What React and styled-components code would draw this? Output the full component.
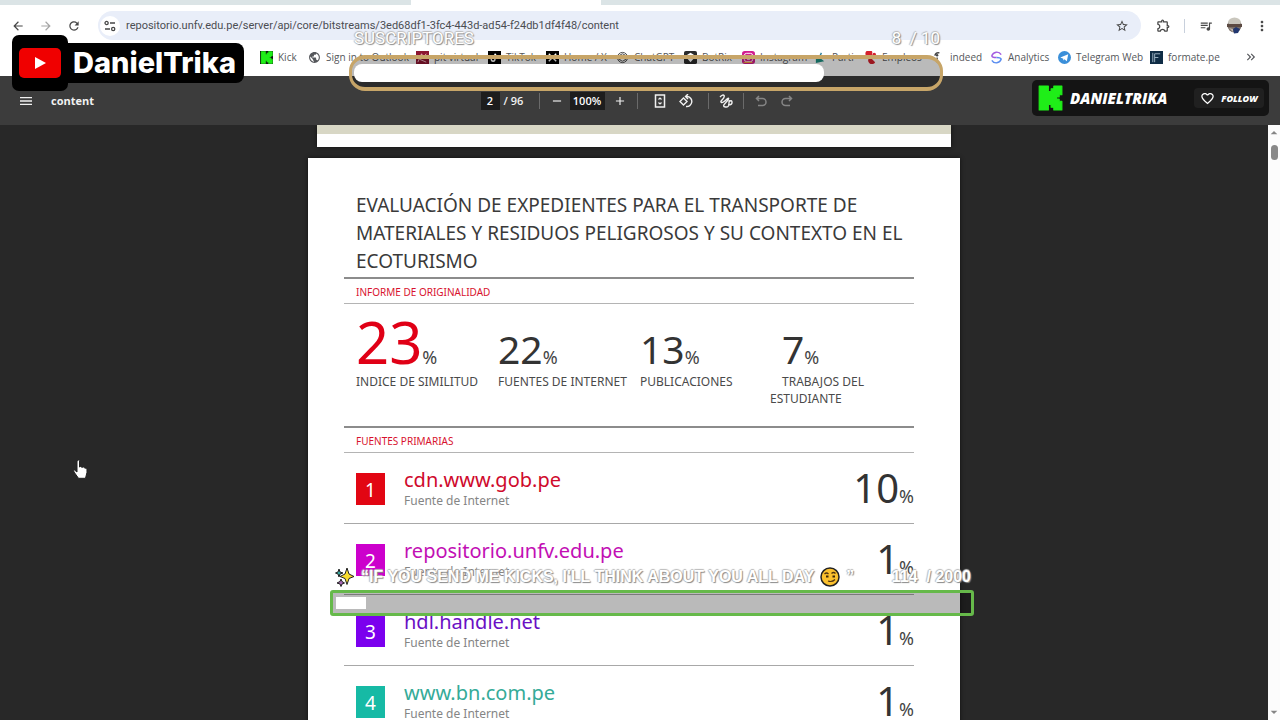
import React from 'react'
import styled, { createGlobalStyle, css } from 'styled-components'
import {
    MdArrowBack, MdArrowForward, MdRefresh, MdStarBorder, MdOutlineExtension, MdQueueMusic,
    MdMoreVert, MdMenu, MdAdd, MdRemove, MdFavoriteBorder,
    MdKeyboardDoubleArrowRight, MdPublic, MdArrowDropUp, MdArrowDropDown
} from 'react-icons/md'

const GlobalStyle = createGlobalStyle`
    * {
        box-sizing: border-box;
    }
    body {
        margin: 0;
        background-color: #282828;
        font-family: "Noto Sans", sans-serif;
        overflow: hidden;
    }
    button, input {
        font-family: inherit;
        border: none;
        padding: 0;
    }
    h1, h2, p, ol, dl, dd, dt {
        margin: 0;
        padding: 0;
        font-weight: 400;
    }
`

const Browser = styled.div`
    position: relative;
    display: flex;
    flex-direction: column;
    height: 100vh;
    width: 100%;
    overflow: hidden;
`

const TabStrip = styled.div`
    display: flex;
    justify-content: center;
    flex-shrink: 0;
    height: 5px;
    padding-right: 268px;
    background-color: #dbe4e6;
`

const ActiveTab = styled.div`
    width: 190px;
    background-color: #fff;
`

const NavBar = styled.nav`
    display: flex;
    align-items: center;
    flex-shrink: 0;
    height: 41px;
    padding: 0 4px;
    background-color: #fff;
    color: #474747;
    font-family: Roboto, sans-serif;
`

const IconButton = styled.button`
    display: flex;
    align-items: center;
    justify-content: center;
    width: ${props => props.$width || 28}px;
    height: 28px;
    background: none;
    color: ${props => props.$muted ? '#a5a5a5' : 'inherit'};
    font-size: ${props => props.$size || 14}px;
`

const AddressBar = styled.div`
    display: flex;
    align-items: center;
    flex: 1;
    height: 29px;
    margin: 0 8px 0 10px;
    padding: 0 5px;
    gap: 6px;
    border-radius: 15px;
    background-color: #e9eef9;
`

const SiteInfo = styled.button`
    display: flex;
    align-items: center;
    justify-content: center;
    width: 20px;
    height: 20px;
    margin-left: -3px;
    border-radius: 50%;
    background-color: #fff;
`

const Address = styled.input`
    flex: 1;
    background: none;
    color: #4b4d52;
    font-size: 11px;
    outline: none;
`

const Separator = styled.span`
    width: 1px;
    height: 14px;
    margin: 0 7px;
    background-color: #c8d0dc;
`

const Bookmarks = styled.div`
    display: grid;
    grid-template-columns: 48px 108px 72px 58px 70px 68px 58px 72px 50px 68px 58px 68px 92px 1fr auto;
    align-items: center;
    flex-shrink: 0;
    height: 30px;
    padding: 0 22px 8px 260px;
    background-color: #fff;
    color: #55575b;
    font-family: "Open Sans", sans-serif;
`

const Bookmark = styled.a`
    display: flex;
    align-items: center;
    gap: 5px;
    color: inherit;
    font-size: 10px;
    white-space: nowrap;
    text-decoration: none;
    & svg {
        flex-shrink: 0;
        width: 13px;
        height: 13px;
    }
`

const PdfBar = styled.header`
    display: grid;
    grid-template-columns: 1fr auto 1fr;
    align-items: center;
    flex-shrink: 0;
    height: 49px;
    padding: 0 12px;
    background-color: #3c3c3c;
    color: #f1f1f1;
    font-family: "Open Sans", sans-serif;
`

const PdfTitle = styled.div`
    display: flex;
    align-items: center;
    gap: 11px;
    font-size: 11px;
    font-weight: 700;
`

const PdfControls = styled.div`
    display: flex;
    align-items: center;
    font-size: 11px;
    font-weight: 600;
`

const PdfGroup = styled.div`
    display: flex;
    margin: 0 5px;
`

const PdfField = styled.input`
    width: ${props => props.$width}px;
    height: 18px;
    margin-right: 2px;
    background-color: #1d1d1d;
    color: #fff;
    font-size: 11px;
    font-weight: 600;
    text-align: center;
`

const PageTotal = styled.span`
    width: 33px;
    padding-left: 2px;
`

const PdfDivider = styled.span`
    width: 1px;
    height: 16px;
    margin: 0 4px;
    background-color: #6a6a6a;
`

const Viewer = styled.main`
    display: flex;
    flex: 1;
    min-height: 0;
    background-color: #282828;
`

const Pages = styled.div`
    display: flex;
    flex: 1;
    flex-direction: column;
    align-items: center;
    gap: 11px;
    overflow: hidden;
`

const PreviousPage = styled.div`
    flex-shrink: 0;
    width: 634px;
    height: 22px;
    border-top: 9px solid #d8d7c5;
    background-color: #fff;
    box-shadow: 0 0 4px #111;
`

const Page = styled.article`
    flex-shrink: 0;
    width: 652px;
    padding: 33px 46px 40px 36px;
    background-color: #fff;
    color: #3a3a3a;
    box-shadow: 0 0 4px #111;
`

const Title = styled.h1`
    padding: 0 0 2px 12px;
    border-bottom: 2px solid #8c8c8c;
    font-size: 19px;
    line-height: 28px;
    white-space: nowrap;
`

const SectionTitle = styled.h2`
    height: 25px;
    padding-left: 12px;
    border-bottom: 1px solid #b4b4b4;
    color: #d8122e;
    font-size: 10px;
    line-height: 26px;
`

const Stats = styled.dl`
    display: grid;
    grid-template-columns: repeat(4, 142px);
    height: 124px;
    padding-left: 12px;
    border-bottom: 2px solid #8c8c8c;
`

const Stat = styled.div`
    display: flex;
    flex-direction: column-reverse;
    justify-content: flex-end;
`

const StatValue = styled.dd`
    height: 69px;
    color: ${props => props.$main ? '#e00016' : '#333'};
    font-size: ${props => props.$main ? 58 : 39}px;
    line-height: ${props => props.$main ? 75 : 89}px;
    white-space: nowrap;
`

const Percent = styled.small`
    color: #444;
    font-size: 18px;
`

// the second line hangs out to the left of the first one
const StatLabel = styled.dt`
    margin-left: -12px;
    color: #4a4a4a;
    font-size: 12px;
    line-height: 17px;
    text-indent: 12px;
    white-space: pre;
`

const Sources = styled.ol`
    list-style: none;
`

const Source = styled.li`
    display: flex;
    align-items: center;
    height: 71px;
    padding: 2px 0 0 12px;
    border-bottom: 1px solid #a8a8a8;
`

const Rank = styled.span`
    width: 29px;
    height: 32px;
    margin-right: 19px;
    background-color: ${props => props.$color};
    color: #fff;
    font-size: 19px;
    line-height: 34px;
    text-align: center;
`

const SourceText = styled.div`
    flex: 1;
    padding-bottom: 2px;
`

const SourceName = styled.p`
    color: ${props => props.$color};
    font-size: 20px;
    line-height: 25px;
`

const SourceKind = styled.p`
    color: #858585;
    font-size: 12px;
    line-height: 17px;
`

const SourceShare = styled.span`
    padding-top: 6px;
    color: #333;
    font-size: 40px;
    line-height: 60px;
`

const ScrollBar = styled.div`
    display: flex;
    flex-direction: column;
    align-items: center;
    justify-content: space-between;
    width: 12px;
    background-color: #fcfcfc;
    color: #858585;
    font-size: 16px;
`

const ScrollThumb = styled.div`
    width: 7px;
    height: 15px;
    margin: 4px 0 auto;
    border-radius: 4px;
    background-color: #888;
`

const outline = css`
    color: #fff;
    text-shadow: 1px 1px 1px #888, -1px 0 1px #bbb, 0 -1px 1px #bbb;
`

const YoutubeTag = styled.div`
    position: absolute;
    top: 35px;
    left: 12px;
    display: flex;
    align-items: center;
`

const YoutubeIcon = styled.div`
    display: flex;
    align-items: center;
    justify-content: center;
    width: 56px;
    height: 56px;
    border-radius: 7px;
    background-color: #000;
`

const YoutubeName = styled.div`
    height: 40px;
    margin-left: -4px;
    padding: 0 8px 0 9px;
    border-radius: 0 8px 8px 0;
    background-color: #000;
    color: #fff;
    font-family: Inter, sans-serif;
    font-size: 29px;
    font-weight: 800;
    line-height: 40px;
`

const KickTag = styled.div`
    position: absolute;
    top: 80px;
    right: 11px;
    display: flex;
    align-items: center;
    gap: 7px;
    width: 237px;
    height: 36px;
    padding: 0 5px;
    border-radius: 5px;
    background-color: #141414;
    color: #fff;
    font-family: "Open Sans", sans-serif;
    font-size: 15px;
    font-style: italic;
    font-weight: 800;
`

const FollowButton = styled.button`
    display: flex;
    align-items: center;
    justify-content: center;
    gap: 6px;
    width: 70px;
    height: 20px;
    margin-left: auto;
    border-radius: 4px;
    background-color: #202020;
    color: #fff;
    font-size: 9px;
    font-style: italic;
    font-weight: 800;
    & svg {
        width: 15px;
        height: 15px;
    }
`

const Goal = styled.div`
    position: absolute;
    top: ${props => props.$top}px;
    left: ${props => props.$left}px;
    width: ${props => props.$width}px;
`

const GoalHead = styled.div`
    display: flex;
    align-items: center;
    justify-content: space-between;
    height: 26px;
    padding: 0 3px 0 5px;
    font-family: ${props => props.$font};
    font-size: ${props => props.$size}px;
    font-weight: ${props => props.$weight};
    white-space: pre;
    ${outline}
`

const GoalText = styled.span`
    display: flex;
    align-items: center;
    gap: 6px;
`

const SubsTrack = styled.div`
    height: 36px;
    margin-top: 4px;
    padding: 5px 0;
    border: 4px solid #c7a568;
    border-width: 4px 3px;
    border-radius: 16px;
    background-color: rgba(0, 0, 0, 0.27);
`

const SubsFill = styled.div`
    height: 18px;
    margin-left: 2px;
    border-radius: 8px;
    background-color: #fff;
`

const KicksTrack = styled.div`
    height: 26px;
    padding: 4px 103px 4px 3px;
    border: 3px solid #66b94a;
    border-radius: 3px;
    background-color: rgba(0, 0, 0, 0.27);
`

const KicksFill = styled.div`
    height: 12px;
    background-color: #fff;
`

const Hand = styled.svg`
    position: absolute;
    top: 459px;
    left: 73px;
    width: 15px;
    height: 21px;
`

function SiteIcon() {
    return (
        <svg width="12" height="12" viewBox="0 0 12 12" fill="none" stroke="#474747" strokeWidth="1.3">
            <circle cx="2.6" cy="3" r="1.6" />
            <path d="M6 3h5M1 9h5" />
            <circle cx="9.2" cy="9" r="1.6" />
        </svg>
    )
}

function Avatar() {
    return (
        <svg width="17" height="17" viewBox="0 0 17 17">
            <circle cx="8.5" cy="8.5" r="7" fill="#7b7068" />
            <path d="M2 6a6.5 5.5 0 0 1 13 0l-2 2H4z" fill="#c9c6bd" />
            <path d="M1 7h15v3H1z" fill="#5c4a43" />
            <path d="M7 12l3-2 4 2-2 4-4 .5z" fill="#22376f" />
            <path d="M3 11l4 1v3z" fill="#c0b6ae" />
        </svg>
    )
}

function KickIcon({ size, boxed }) {
    return (
        <svg width={size} height={size} viewBox="0 0 24 24">
            {boxed && <path d="M0 0h24v24H0z" fill="#111" />}
            <path
                d="M2 1h8.5v5H13V3.5h2.5V1H23v8h-2.5v2H18v2h2.5v2H23v8h-7.5v-2.5H13V18h-2.5v5H2z"
                fill="#1fee18"
                stroke="#1fee18"
                strokeLinejoin="round"
            />
        </svg>
    )
}

function Square({ color, children, round = 0 }) {
    return (
        <svg viewBox="0 0 14 14">
            <rect width="14" height="14" rx={round} fill={color} />
            {children}
        </svg>
    )
}

const bookmarks = [
    { name: 'Kick', icon: <KickIcon size={13} boxed /> },
    { name: 'Sign in to Outlook', icon: <MdPublic /> },
    {
        name: 'pit virtual',
        icon: <Square color="#8c1530"><path d="M2 12l4-9 2 4 3-4M4 9l7 3" stroke="#e9b9c2" fill="none" /></Square>
    },
    {
        name: 'TikTok',
        icon: <Square color="#000"><path d="M7.5 3v6a2 2 0 1 1-2-2M7.5 3q1 2.5 3 2.5" stroke="#fff" strokeWidth="1.5" fill="none" /></Square>
    },
    {
        name: 'Home / X',
        icon: <Square color="#000"><path d="M3 3l8 8M11 3l-8 8" stroke="#fff" strokeWidth="1.5" /></Square>
    },
    {
        name: 'ChatGPT',
        icon: (
            <svg viewBox="0 0 14 14" fill="none" stroke="#444">
                <circle cx="7" cy="7" r="5.5" />
                <path d="M3 5l4-2 4 2v4l-4 2-4-2zM4 9l6-4M5 5l5 4" />
            </svg>
        )
    },
    {
        name: 'BotRix',
        icon: <Square color="#2b2b2b" round={2}><path d="M7 2l3.5 2v4L7 12 3.5 8V4z" fill="#fff" /></Square>
    },
    {
        name: 'Instagram',
        icon: (
            <Square color="#d21d8f" round={3}>
                <rect x="2.5" y="2.5" width="9" height="9" rx="2.5" fill="none" stroke="#fff" />
                <circle cx="7" cy="7" r="2.2" fill="none" stroke="#fff" />
                <path d="M1 13h11l-2-1.5H3z" fill="#f6a43c" />
            </Square>
        )
    },
    {
        name: 'Parti',
        icon: (
            <svg viewBox="0 0 14 14">
                <path d="M2 4l9 7-9 2z" fill="#1e9183" />
                <path d="M6 6l2-4M8 8l5-3" stroke="#2a7f9c" strokeWidth="1.5" />
            </svg>
        )
    },
    {
        name: 'Empleos',
        icon: (
            <svg viewBox="0 0 14 14">
                <path d="M9 1a4 4 0 1 0-3 6 4 4 0 1 0 6 5L8 8z" fill="#d5202c" />
                <circle cx="11" cy="4" r="2" fill="#d5202c" />
            </svg>
        )
    },
    {
        name: 'indeed',
        icon: (
            <svg viewBox="0 0 14 14">
                <path d="M3 5q1-4 5-3M5.5 7v5" stroke="#444" strokeWidth="1.5" fill="none" />
                <circle cx="5.5" cy="4.5" r="1.3" fill="#444" />
            </svg>
        )
    },
    {
        name: 'Analytics',
        icon: (
            <svg viewBox="0 0 14 14" fill="none" strokeWidth="1.6">
                <path d="M12 4A5.5 5.5 0 0 0 2 5q0 2 5 2" stroke="#a45be0" />
                <path d="M2 10a5.5 5.5 0 0 0 10-1q0-2-5-2" stroke="#5a8df0" />
            </svg>
        )
    },
    {
        name: 'Telegram Web',
        icon: (
            <svg viewBox="0 0 14 14">
                <circle cx="7" cy="7" r="7" fill="#3a8fd9" />
                <path d="M2.5 7l8.5-3.5-1.5 7.5-2.5-2-1.3 1.3V8.3z" fill="#fff" />
            </svg>
        )
    },
    {
        name: 'formate.pe',
        icon: <Square color="#0f2c45"><path d="M5 12V3h6M5 7h4M3 12V2" stroke="#9fb6c6" fill="none" /></Square>
    }
]

const stats = [
    { value: 23, label: 'INDICE DE SIMILITUD', main: true },
    { value: 22, label: 'FUENTES DE INTERNET' },
    { value: 13, label: 'PUBLICACIONES' },
    { value: 7, label: 'TRABAJOS DEL\nESTUDIANTE' }
]

const sources = [
    { name: 'cdn.www.gob.pe', share: 10, color: '#e20613', text: '#cf0a2c' },
    { name: 'repositorio.unfv.edu.pe', share: 1, color: '#cc00cc', text: '#c20fb4' },
    { name: 'hdl.handle.net', share: 1, color: '#7b00ee', text: '#6a10c4' },
    { name: 'www.bn.com.pe', share: 1, color: '#16baa5', text: '#35ab98' }
]

const subs = { current: 8, target: 10 }
const kicks = { current: 114, target: 2000 }

function Sparkles() {
    return (
        <svg width="20" height="20" viewBox="0 0 20 20" stroke="#222" strokeWidth="1">
            <path d="M12 1l2 6 5 2.5-5 2-2 6-2-6-5-2 5-2.5z" fill="#f7dc2e" />
            <path d="M4 2l1 3 3 1-3 1-1 3-1-3-2.5-1L3 5z" fill="#38a7a0" />
            <path d="M6 12l1 2.5L9.5 16 7 17l-1 2.5L5 17l-3-1 3-1.5z" fill="#a767b5" />
        </svg>
    )
}

function Smirk() {
    return (
        <svg width="20" height="20" viewBox="0 0 20 20">
            <circle cx="10" cy="10" r="9" fill="#fbc02d" stroke="#222" strokeWidth="1.5" />
            <path d="M4.5 7q2-2 4 0M11.5 6.5q2-2 4 0M8 14q4 1.5 7-1.5" fill="none" stroke="#513410" strokeWidth="1.2" />
            <path d="M6 9.5h2.5M12.5 9.5H15" stroke="#3a2408" strokeWidth="1.8" />
        </svg>
    )
}

function App() {
    return (
        <Browser>
            <GlobalStyle />
            <TabStrip>
                <ActiveTab />
            </TabStrip>
            <NavBar>
                <IconButton aria-label="Atrás"><MdArrowBack /></IconButton>
                <IconButton aria-label="Adelante" $muted><MdArrowForward /></IconButton>
                <IconButton aria-label="Recargar"><MdRefresh /></IconButton>
                <AddressBar>
                    <SiteInfo aria-label="Información del sitio"><SiteIcon /></SiteInfo>
                    <Address
                        aria-label="Dirección"
                        defaultValue="repositorio.unfv.edu.pe/server/api/core/bitstreams/3ed68df1-3fc4-443d-ad54-f24db1df4f48/content"
                    />
                    <IconButton aria-label="Favorito"><MdStarBorder /></IconButton>
                </AddressBar>
                <IconButton aria-label="Extensiones" $size={15}><MdOutlineExtension /></IconButton>
                <Separator />
                <IconButton aria-label="Multimedia"><MdQueueMusic /></IconButton>
                <IconButton aria-label="Perfil"><Avatar /></IconButton>
                <IconButton aria-label="Menú" $size={16}><MdMoreVert /></IconButton>
            </NavBar>
            <Bookmarks>
                {
                    bookmarks.map(bookmark => (
                        <Bookmark href="#" key={bookmark.name}>
                            {bookmark.icon}
                            {bookmark.name}
                        </Bookmark>
                    ))
                }
                <MdKeyboardDoubleArrowRight size={14} />
            </Bookmarks>

            <PdfBar>
                <PdfTitle>
                    <IconButton aria-label="Barra lateral" $size={16}><MdMenu /></IconButton>
                    content
                </PdfTitle>
                <PdfControls>
                    <PdfField $width={19} aria-label="Página" defaultValue="2" />
                    <PageTotal>/ 96</PageTotal>
                    <PdfDivider />
                    <IconButton $width={26} aria-label="Reducir"><MdRemove /></IconButton>
                    <PdfField $width={35} aria-label="Zoom" defaultValue="100%" />
                    <IconButton $width={26} aria-label="Ampliar"><MdAdd /></IconButton>
                    <PdfDivider />
                    <PdfGroup>
                        <IconButton $width={26} aria-label="Ajustar a la página">
                            <svg width="12" height="14" viewBox="0 0 12 14" fill="none" stroke="#f1f1f1" strokeWidth="1.5">
                                <rect x="1.5" y="1" width="9" height="12" />
                                <path d="M4.5 5.5L6 4l1.5 1.5M4.5 8.5L6 10l1.5-1.5" strokeWidth="1.2" />
                            </svg>
                        </IconButton>
                        <IconButton $width={26} aria-label="Girar">
                            <svg width="14" height="14" viewBox="0 0 14 14" fill="none" stroke="#f1f1f1" strokeWidth="1.4">
                                <path d="M4.5 4L8 7.5 4.5 11 1 7.5zM7 2.5h1.5a5 5 0 1 1-1.5 10M9 0L6.5 2.5 9 5" />
                            </svg>
                        </IconButton>
                    </PdfGroup>
                    <PdfDivider />
                    <IconButton $width={26} aria-label="Dibujar">
                        <svg width="14" height="14" viewBox="0 0 14 14" fill="none" stroke="#f1f1f1" strokeWidth="1.4">
                            <path d="M1 3q3-3 4-1.5T3 6q-2 2-.5 2.5T8 5q2-1.5 1.5 0T6 9.5 6.5 13 10 9.5 11 7q2-1 2 1.5T9 11" />
                        </svg>
                    </IconButton>
                    <PdfDivider />
                    <IconButton $width={26} aria-label="Deshacer">
                        <svg width="12" height="12" viewBox="0 0 12 12" fill="none" stroke="#858585" strokeWidth="1.5">
                            <path d="M4 1L1.5 3.5 4 6M2 3.5h5.5a3.5 3.5 0 0 1 0 7H3" />
                        </svg>
                    </IconButton>
                    <IconButton $width={26} aria-label="Rehacer">
                        <svg width="12" height="12" viewBox="0 0 12 12" fill="none" stroke="#858585" strokeWidth="1.5">
                            <path d="M8 1l2.5 2.5L8 6M10 3.5H4.5a3.5 3.5 0 0 0 0 7H9" />
                        </svg>
                    </IconButton>
                </PdfControls>
            </PdfBar>

            <Viewer>
                <Pages>
                    <PreviousPage />
                    <Page>
                        <Title>
                            EVALUACIÓN DE EXPEDIENTES PARA EL TRANSPORTE DE<br />
                            MATERIALES Y RESIDUOS PELIGROSOS Y SU CONTEXTO EN EL<br />
                            ECOTURISMO
                        </Title>
                        <SectionTitle>INFORME DE ORIGINALIDAD</SectionTitle>
                        <Stats>
                            {
                                stats.map(stat => (
                                    <Stat key={stat.label}>
                                        <StatLabel>{stat.label}</StatLabel>
                                        <StatValue $main={stat.main}>{stat.value}<Percent>%</Percent></StatValue>
                                    </Stat>
                                ))
                            }
                        </Stats>
                        <SectionTitle>FUENTES PRIMARIAS</SectionTitle>
                        <Sources>
                            {
                                sources.map((source, index) => (
                                    <Source key={source.name}>
                                        <Rank $color={source.color}>{index + 1}</Rank>
                                        <SourceText>
                                            <SourceName $color={source.text}>{source.name}</SourceName>
                                            <SourceKind>Fuente de Internet</SourceKind>
                                        </SourceText>
                                        <SourceShare>{source.share}<Percent>%</Percent></SourceShare>
                                    </Source>
                                ))
                            }
                        </Sources>
                    </Page>
                </Pages>
                <ScrollBar>
                    <MdArrowDropUp />
                    <ScrollThumb />
                    <MdArrowDropDown />
                </ScrollBar>
            </Viewer>

            <Hand viewBox="0 0 15 21">
                <path
                    d="M4 2q1.5-2 2.5 0v6l1-.5 1.5.8 1.5-.3 1.3 1 1.5.3q1 .7.7 4l-1.5 6H5.5L1 13q-1-2 .5-2L4 13z"
                    fill="#fff"
                    stroke="#222"
                />
            </Hand>

            <Goal $top={25} $left={349} $width={594}>
                <GoalHead $size={17} $weight={400} $font="Roboto, sans-serif">
                    <span>SUSCRIPTORES</span>
                    <span>{subs.current}  / {subs.target}</span>
                </GoalHead>
                <SubsTrack
                    role="progressbar"
                    aria-label="Suscriptores"
                    aria-valuenow={subs.current}
                    aria-valuemax={subs.target}
                >
                    <SubsFill style={{ width: `${subs.current / subs.target * 100}%` }} />
                </SubsTrack>
            </Goal>

            <YoutubeTag>
                <YoutubeIcon>
                    <svg width="44" height="32" viewBox="0 0 44 32">
                        <rect x="1" y="1" width="42" height="30" rx="5" fill="#f00000" />
                        <path d="M17 10l11 6-11 6z" fill="#fff" />
                    </svg>
                </YoutubeIcon>
                <YoutubeName>DanielTrika</YoutubeName>
            </YoutubeTag>

            <KickTag>
                <KickIcon size={26} />
                <span>DANIELTRIKA</span>
                <FollowButton><MdFavoriteBorder />FOLLOW</FollowButton>
            </KickTag>

            <Goal $top={564} $left={330} $width={644}>
                <GoalHead $size={16} $weight={700} $font='"Liberation Sans", Arial, sans-serif'>
                    <GoalText>
                        <Sparkles />
                        <span>“IF YOU SEND ME KICKS, I'LL THINK ABOUT YOU ALL DAY</span>
                        <Smirk />”
                    </GoalText>
                    <span>{kicks.current}  / {kicks.target}</span>
                </GoalHead>
                <KicksTrack
                    role="progressbar"
                    aria-label="Kicks"
                    aria-valuenow={kicks.current}
                    aria-valuemax={kicks.target}
                >
                    <KicksFill style={{ width: `${kicks.current / kicks.target * 100}%` }} />
                </KicksTrack>
            </Goal>
        </Browser>
    )
}

export default App
